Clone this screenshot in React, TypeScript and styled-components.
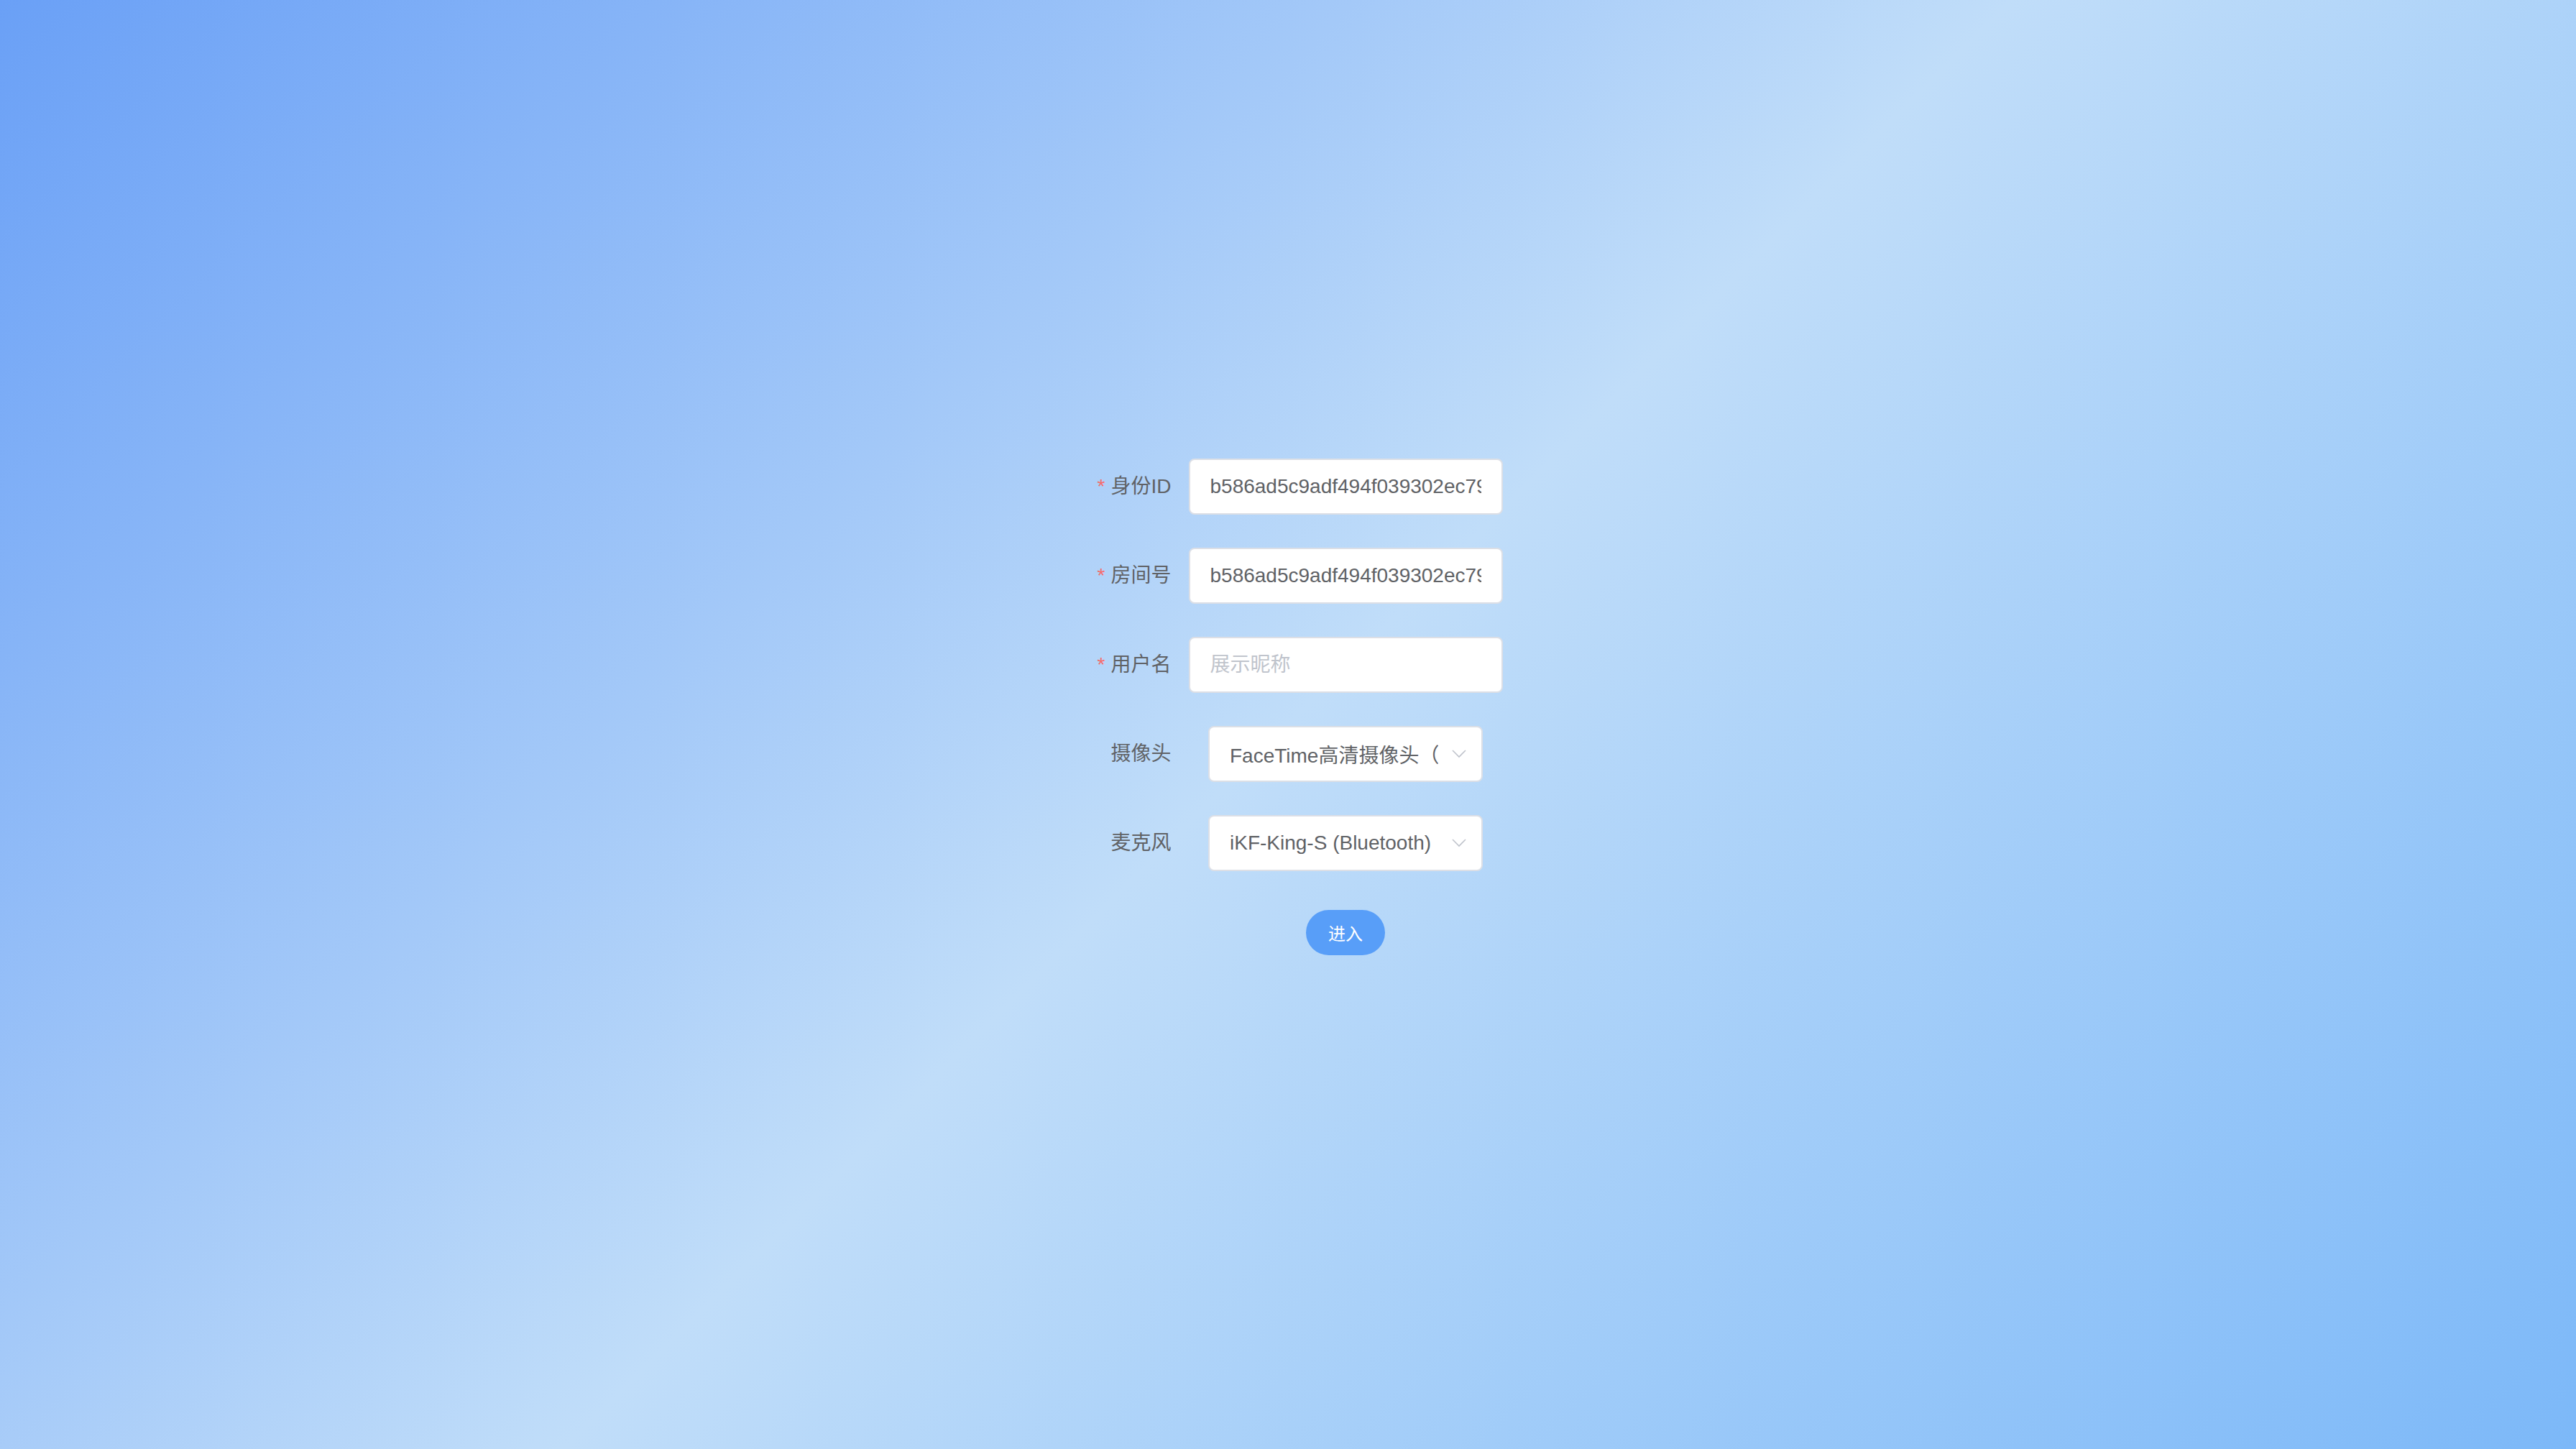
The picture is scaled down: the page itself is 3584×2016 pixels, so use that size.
import React from "react";
import styled, { createGlobalStyle } from "styled-components";

const GlobalStyle = createGlobalStyle`
  html, body {
    margin: 0;
    padding: 0;
  }
  body {
    font-family: "Liberation Sans", "Noto Sans CJK SC", sans-serif;
  }
  * { box-sizing: border-box; }
`;

const Page = styled.div`
  width: 100vw;
  height: 100vh;
  display: flex;
  align-items: center;
  justify-content: center;
  background: linear-gradient(135deg, #6aa0f6 0%, #c0ddf9 50%, #7cb8f8 100%);
  overflow: hidden;
`;

const Form = styled.form`
  width: 597px;
  display: flex;
  flex-direction: column;
  margin-top: 4px;
`;

const Row = styled.div`
  display: flex;
  align-items: center;
  height: 78px;
  margin-bottom: 46px;
`;

const Label = styled.label<{ $required?: boolean }>`
  width: 160px;
  flex: none;
  padding-right: 24px;
  text-align: right;
  font-size: 28px;
  line-height: 78px;
  color: #606266;
  &::before {
    content: ${(p) => (p.$required ? '"*"' : '""')};
    color: #f56c6c;
    margin-right: 8px;
  }
`;

const Content = styled.div`
  flex: 1;
  display: flex;
  justify-content: center;
  align-items: center;
  height: 78px;
`;

const TextInput = styled.input`
  width: 100%;
  height: 78px;
  border: 2px solid #dcdfe6;
  border-radius: 8px;
  background: #fff;
  padding: 0 28px;
  font-family: "Liberation Sans", "Noto Sans CJK SC", sans-serif;
  font-size: 28px;
  color: #606266;
  outline: none;
  &::placeholder {
    color: #c0c4cc;
  }
`;

const SelectBox = styled.div`
  position: relative;
  width: 382px;
  height: 78px;
`;

const SelectInput = styled(TextInput)`
  padding-right: 60px;
  cursor: pointer;
`;

const Arrow = styled.svg`
  position: absolute;
  right: 23px;
  top: 50%;
  width: 20px;
  height: 12px;
  margin-top: -6px;
  pointer-events: none;
`;

const Button = styled.button`
  height: 63px;
  padding: 0 31px;
  border: none;
  border-radius: 32px;
  background: #589ef8;
  color: #fff;
  font-family: "Liberation Sans", "Noto Sans CJK SC", sans-serif;
  font-size: 24px;
  cursor: pointer;
`;

const Chevron = () => (
  <Arrow viewBox="0 0 20 12">
    <polyline points="1,1 10,10 19,1" fill="none" stroke="#c0c4cc" strokeWidth="1.6" />
  </Arrow>
);

const Select = ({ value }: { value: string }) => (
  <SelectBox>
    <SelectInput readOnly value={value} />
    <Chevron />
  </SelectBox>
);

export default function App() {
  return (
    <>
      <GlobalStyle />
      <Page>
        <Form onSubmit={(e) => e.preventDefault()}>
          <Row>
            <Label $required>身份ID</Label>
            <Content>
              <TextInput defaultValue="b586ad5c9adf494f039302ec79e1a4d2" />
            </Content>
          </Row>
          <Row>
            <Label $required>房间号</Label>
            <Content>
              <TextInput defaultValue="b586ad5c9adf494f039302ec79e1a4d2" />
            </Content>
          </Row>
          <Row>
            <Label $required>用户名</Label>
            <Content>
              <TextInput placeholder="展示昵称" />
            </Content>
          </Row>
          <Row>
            <Label>摄像头</Label>
            <Content>
              <Select value="FaceTime高清摄像头（内建）" />
            </Content>
          </Row>
          <Row>
            <Label>麦克风</Label>
            <Content>
              <Select value="iKF-King-S (Bluetooth)" />
            </Content>
          </Row>
          <Row>
            <Label />
            <Content>
              <Button type="submit">进入</Button>
            </Content>
          </Row>
        </Form>
      </Page>
    </>
  );
}
